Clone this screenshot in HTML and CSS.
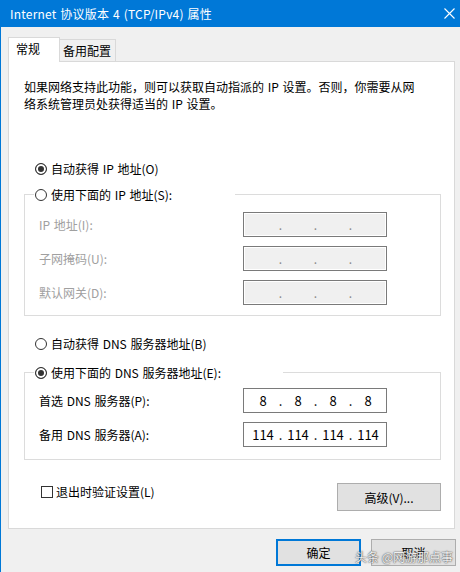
FILE: index.html
```html
<!DOCTYPE html>
<html lang="zh-CN">
<head>
    <meta charset="UTF-8">
    <meta name="viewport" content="width=device-width, initial-scale=1.0">
    <title>Internet 协议版本 4 (TCP/IPv4) 属性</title>
    <link rel="stylesheet" href="styles.css">
</head>
<body>
    <div class="window">
        <div class="titlebar">
            <span class="title">Internet 协议版本 4 (TCP/IPv4) 属性</span>
            <svg class="close" width="11" height="11" viewBox="0 0 11 11">
                <path d="M0.5 0.5 L10.5 10.5 M10.5 0.5 L0.5 10.5" stroke="#fff" stroke-width="1.1" fill="none"/>
            </svg>
        </div>
        <div class="content">
            <div class="tabs">
                <div class="tab active">常规</div>
                <div class="tab">备用配置</div>
            </div>
            <div class="panel">
                <p class="desc">如果网络支持此功能，则可以获取自动指派的 IP 设置。否则，你需要从网<br>络系统管理员处获得适当的 IP 设置。</p>

                <div class="option first"><span class="radio on"></span>自动获得 IP 地址(O)</div>
                <fieldset class="group group-ip">
                    <legend class="legend-ip"><span class="radio"></span>使用下面的 IP 地址(S):</legend>
                    <div class="fields">
                        <span class="label off">IP 地址(I):</span>
                        <div class="ipbox off"><span class="seg"></span><span class="dot">.</span><span class="seg"></span><span class="dot">.</span><span class="seg"></span><span class="dot">.</span><span class="seg"></span></div>
                        <span class="label off">子网掩码(U):</span>
                        <div class="ipbox off"><span class="seg"></span><span class="dot">.</span><span class="seg"></span><span class="dot">.</span><span class="seg"></span><span class="dot">.</span><span class="seg"></span></div>
                        <span class="label off">默认网关(D):</span>
                        <div class="ipbox off"><span class="seg"></span><span class="dot">.</span><span class="seg"></span><span class="dot">.</span><span class="seg"></span><span class="dot">.</span><span class="seg"></span></div>
                    </div>
                </fieldset>

                <div class="option dns-auto"><span class="radio"></span>自动获得 DNS 服务器地址(B)</div>
                <fieldset class="group group-dns">
                    <legend class="legend-dns"><span class="radio on"></span>使用下面的 DNS 服务器地址(E):</legend>
                    <div class="fields">
                        <span class="label">首选 DNS 服务器(P):</span>
                        <div class="ipbox"><span class="seg">8</span><span class="dot">.</span><span class="seg">8</span><span class="dot">.</span><span class="seg">8</span><span class="dot">.</span><span class="seg">8</span></div>
                        <span class="label">备用 DNS 服务器(A):</span>
                        <div class="ipbox"><span class="seg">114</span><span class="dot">.</span><span class="seg">114</span><span class="dot">.</span><span class="seg">114</span><span class="dot">.</span><span class="seg">114</span></div>
                    </div>
                </fieldset>

                <div class="bottom-row">
                    <div class="check-row"><span class="checkbox"></span>退出时验证设置(L)</div>
                    <div class="btn advanced">高级(V)...</div>
                </div>
            </div>
            <div class="actions">
                <div class="btn default">确定</div>
                <div class="btn">取消</div>
            </div>
        </div>
        <div class="watermark">头条 @网游那点事</div>
    </div>
</body>
</html>
```

FILE: styles.css
```css
*{
    box-sizing: border-box;
}
body{
    margin:0;
    background:#f0f0f0;
    font-family:"Noto Sans CJK SC", "Liberation Sans", sans-serif;
    font-size:12px;
    line-height:17px;
    word-spacing:1px;
    color:#000;
}
.window{
    width:460px;
    height:572px;
    position:relative;
    overflow:hidden;
}

/* 标题栏 */
.titlebar{
    height:27px;
    background:#0078d7;
    color:#fff;
    display:flex;
    align-items:center;
    justify-content:space-between;
    padding:0 5px 0 10px;
}
.title{
    letter-spacing:0.2px;
}
.close{
    display:block;
}

.content{
    height:545px;
    border-left:1px solid #0078d7;
    padding-top:10px;
}

/* 选项卡 */
.tabs{
    display:flex;
    align-items:flex-end;
    height:24px;
    margin-left:7px;
}
.tab{
    border:1px solid #d9d9d9;
    border-bottom:none;
    background:#f0f0f0;
    height:22px;
    width:57px;
    margin-left:-1px;
    padding:2px 0 0 3px;
}
.tab.active{
    background:#fff;
    height:25px;
    width:52px;
    margin:0 0 -1px 0;
    padding:2px 0 0 7px;
    position:relative;
    z-index:1;
}

.panel{
    margin-left:7px;
    width:447px;
    height:468px;
    border:1px solid #d9d9d9;
    background:#fff;
    padding:0 13px 0 15px;
}
.desc{
    margin:16px 0 0;
    white-space:nowrap;
}

/* 单选框 */
.option{
    display:flex;
    align-items:center;
    margin-left:11px;
}
.option.first{
    margin-top:48px;
}
.option.dns-auto{
    margin-top:19px;
}
.radio{
    width:12px;
    height:12px;
    border:1px solid #333;
    border-radius:50%;
    background:#fff;
    margin-right:4px;
    flex:none;
}
.radio.on{
    background:#333;
    box-shadow:inset 0 0 0 2px #fff;
}

/* 分组框 */
.group{
    margin:0;
    width:417px;
    border:1px solid #dcdcdc;
    padding:0 0 10px 9px;
    min-inline-size:0;
}
.group-ip{
    margin-top:9px;
}
.group-dns{
    margin-top:12px;
    padding-bottom:12px;
}
.group legend{
    padding:0 0 0 1px;
    display:flex;
    align-items:center;
    height:17px;
}
.legend-ip{
    width:201px;
}
.legend-dns{
    width:249px;
}
.fields{
    display:grid;
    grid-template-columns:204px 144px;
    row-gap:9px;
    align-items:center;
    margin:9px 0 0 5px;
}
.group-dns .fields{
    margin-top:7px;
}
.label.off{
    color:#a0a0a0;
}
.ipbox{
    height:25px;
    border:1px solid #7a7a7a;
    background:#fff;
    display:flex;
    align-items:center;
    padding-left:4px;
    font-size:13px;
    word-spacing:0;
}
.ipbox.off{
    background:#f0f0f0;
    box-shadow:inset 0 0 0 1px #fff;
    color:#8a8a8a;
    font-size:12px;
}
.seg{
    width:30px;
    text-align:center;
}
.dot{
    width:5px;
    text-align:center;
}

/* 底部一行 */
.bottom-row{
    display:flex;
    justify-content:space-between;
    align-items:flex-start;
    width:417px;
    margin-top:23px;
}
.check-row{
    display:flex;
    align-items:center;
    margin-left:17px;
}
.checkbox{
    width:12px;
    height:12px;
    border:1px solid #333;
    background:#fff;
    margin-right:3px;
}
.btn{
    height:27px;
    width:85px;
    border:1px solid #adadad;
    background:#e1e1e1;
    display:flex;
    align-items:center;
    justify-content:center;
}
.btn.advanced{
    width:104px;
    height:28px;
}
.btn.default{
    border:2px solid #0078d7;
}
.actions{
    display:flex;
    justify-content:flex-end;
    gap:10px;
    margin:10px 4px 0 0;
}

/* 水印 */
.watermark{
    position:absolute;
    left:355px;
    top:548px;
    font-size:12px;
    word-spacing:0;
    color:rgba(255,255,255,0.92);
    text-shadow:0 0 1px #444, 0 0 2px #666;
    white-space:nowrap;
}
```
